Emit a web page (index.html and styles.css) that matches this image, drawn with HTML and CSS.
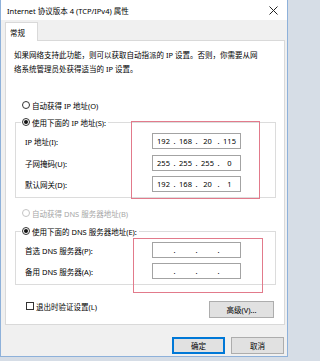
FILE: index.html
```html
<!DOCTYPE html>
<html lang="zh-CN">
<head>
<meta charset="utf-8">
<title>Internet 协议版本 4 (TCP/IPv4) 属性</title>
<link rel="stylesheet" href="styles.css">
</head>
<body>
<div class="window">
  <div class="titlebar">
    <span class="title">Internet 协议版本 4 (TCP/IPv4) 属性</span>
    <svg class="close" width="9" height="9" viewBox="0 0 9 9"><path d="M0.5 0.5L8.5 8.5M8.5 0.5L0.5 8.5" stroke="#222" stroke-width="1" fill="none"/></svg>
  </div>
  <div class="main">
    <div class="tabs"><div class="tab">常规</div></div>
    <div class="panel">
      <p class="desc">如果网络支持此功能，则可以获取自动指派的 IP 设置。否则，你需要从网<br>络系统管理员处获得适当的 IP 设置。</p>

      <label class="radio-row top-radio"><span class="radio"></span>自动获得 IP 地址(O)</label>

      <fieldset class="group group-ip">
        <legend><label class="radio-row"><span class="radio checked"></span>使用下面的 IP 地址(S):</label></legend>
        <div class="field"><span class="lbl">IP 地址(I):</span><span class="ipbox"><span class="oct">192</span><span class="dot">.</span><span class="oct">168</span><span class="dot">.</span><span class="oct">20</span><span class="dot">.</span><span class="oct">115</span></span></div>
        <div class="field"><span class="lbl">子网掩码(U):</span><span class="ipbox"><span class="oct">255</span><span class="dot">.</span><span class="oct">255</span><span class="dot">.</span><span class="oct">255</span><span class="dot">.</span><span class="oct">0</span></span></div>
        <div class="field"><span class="lbl">默认网关(D):</span><span class="ipbox"><span class="oct">192</span><span class="dot">.</span><span class="oct">168</span><span class="dot">.</span><span class="oct">20</span><span class="dot">.</span><span class="oct">1</span></span></div>
      </fieldset>

      <label class="radio-row dns-auto disabled"><span class="radio"></span>自动获得 DNS 服务器地址(B)</label>

      <fieldset class="group group-dns">
        <legend><label class="radio-row"><span class="radio checked"></span>使用下面的 DNS 服务器地址(E):</label></legend>
        <div class="field"><span class="lbl">首选 DNS 服务器(P):</span><span class="ipbox"><span class="oct"></span><span class="dot">.</span><span class="oct"></span><span class="dot">.</span><span class="oct"></span><span class="dot">.</span><span class="oct"></span></span></div>
        <div class="field"><span class="lbl">备用 DNS 服务器(A):</span><span class="ipbox"><span class="oct"></span><span class="dot">.</span><span class="oct"></span><span class="dot">.</span><span class="oct"></span><span class="dot">.</span><span class="oct"></span></span></div>
      </fieldset>

      <div class="bottom-row">
        <label class="check-row"><span class="checkbox"></span>退出时验证设置(L)</label>
        <button class="btn adv">高级(V)...</button>
      </div>

      <div class="mark mark-ip"></div>
      <div class="mark mark-dns"></div>
    </div>
  </div>
  <div class="footer">
    <button class="btn ok">确定</button>
    <button class="btn">取消</button>
  </div>
</div>
</body>
</html>
```

FILE: styles.css
```css
* { box-sizing: border-box; }
html, body { margin: 0; padding: 0; }
body {
  width: 290px;
  height: 361px;
  overflow: hidden;
  background: #d6dde6;
  font-family: "Noto Sans", "Noto Sans CJK SC", sans-serif;
  font-size: 7.5px;
  color: #000;
}
.window {
  width: 288px;
  height: 357px;
  background: #f0f0f0;
  border: 1px solid #8eb1da;
  border-top: none;
  display: flex;
  flex-direction: column;
}
.titlebar {
  height: 20px;
  background: #fff;
  display: flex;
  align-items: center;
  padding: 0 6px 0 6px;
  flex: none;
}
.title { flex: 1; white-space: nowrap; }
.close { margin-right: 3px; }
.main {
  padding: 2px 2px 0 4px;
  flex: none;
}
.tabs { display: flex; }
.tab {
  width: 33px;
  height: 19px;
  background: #fff;
  border: 1px solid #d9d9d9;
  border-bottom: none;
  margin-bottom: -1px;
  position: relative;
  z-index: 1;
  display: flex;
  align-items: center;
  padding-left: 4px;
}
.panel {
  position: relative;
  width: 280px;
  height: 285px;
  background: #fff;
  border: 1px solid #d9d9d9;
}
.desc {
  margin: 7px 0 0 0;
  padding-left: 8px;
  line-height: 14px;
  white-space: nowrap;
}
.radio-row {
  display: flex;
  align-items: center;
  height: 16px;
  white-space: nowrap;
}
.top-radio { margin: 21px 0 0 16px; }
.radio {
  width: 8px;
  height: 8px;
  border: 1px solid #333;
  border-radius: 50%;
  background: #fff;
  margin-right: 2px;
  flex: none;
  display: flex;
  align-items: center;
  justify-content: center;
}
.radio.checked::after {
  content: "";
  width: 4px;
  height: 4px;
  border-radius: 50%;
  background: #111;
}
.disabled { color: #a6a6a6; }
.disabled .radio { border-color: #c4c4c4; }
.group {
  margin: 1px 8px 0 9px;
  padding: 3px 0 5px 0;
  border: 1px solid #dcdcdc;
  min-width: 0;
}
.group legend {
  margin-left: 5px;
  padding: 0 2px 0 1px;
}
.field {
  display: flex;
  align-items: center;
  height: 16px;
  margin-bottom: 6px;
}
.group-ip .field:nth-of-type(2) { margin-bottom: 5px; }
.field:last-child { margin-bottom: 0; }
.group-dns .field { margin-bottom: 5px; }
.group-dns .field:last-child { margin-bottom: 0; }
.lbl {
  width: 136px;
  padding-left: 9px;
  white-space: nowrap;
}
.ipbox {
  width: 89px;
  height: 16px;
  border: 1px solid #a3a3a3;
  display: flex;
  align-items: center;
  padding-left: 1px;
  background: #fff;
}
.oct { width: 19px; text-align: center; }
.dot { width: 3px; text-align: center; }
.dns-auto { margin: 7px 0 0 16px; }
.group-dns { margin-top: 2px; }
.bottom-row {
  display: flex;
  align-items: flex-start;
  margin: 13px 10px 0 0;
}
.check-row {
  display: flex;
  align-items: center;
  height: 16px;
  padding-left: 20px;
  white-space: nowrap;
}
.checkbox {
  width: 8px;
  height: 8px;
  border: 1px solid #333;
  background: #fff;
  margin-right: 2px;
}
.btn {
  font: inherit;
  color: #000;
  background: #e1e1e1;
  border: 1px solid #adadad;
  padding: 0;
  height: 17px;
  width: 53px;
}
.adv { width: 65px; margin: 3px 0 0 auto; }
.mark {
  position: absolute;
  border: 1px solid #e27a8b;
  pointer-events: none;
}
.mark-ip { left: 125px; top: 80px; width: 129px; height: 78px; }
.mark-dns { left: 127px; top: 197px; width: 130px; height: 55px; }
.footer {
  display: flex;
  justify-content: flex-end;
  gap: 6px;
  padding: 12px 3px 0 0;
}
.ok { border: 1px solid #0078d7; box-shadow: inset 0 0 0 1px #0078d7; }
```
